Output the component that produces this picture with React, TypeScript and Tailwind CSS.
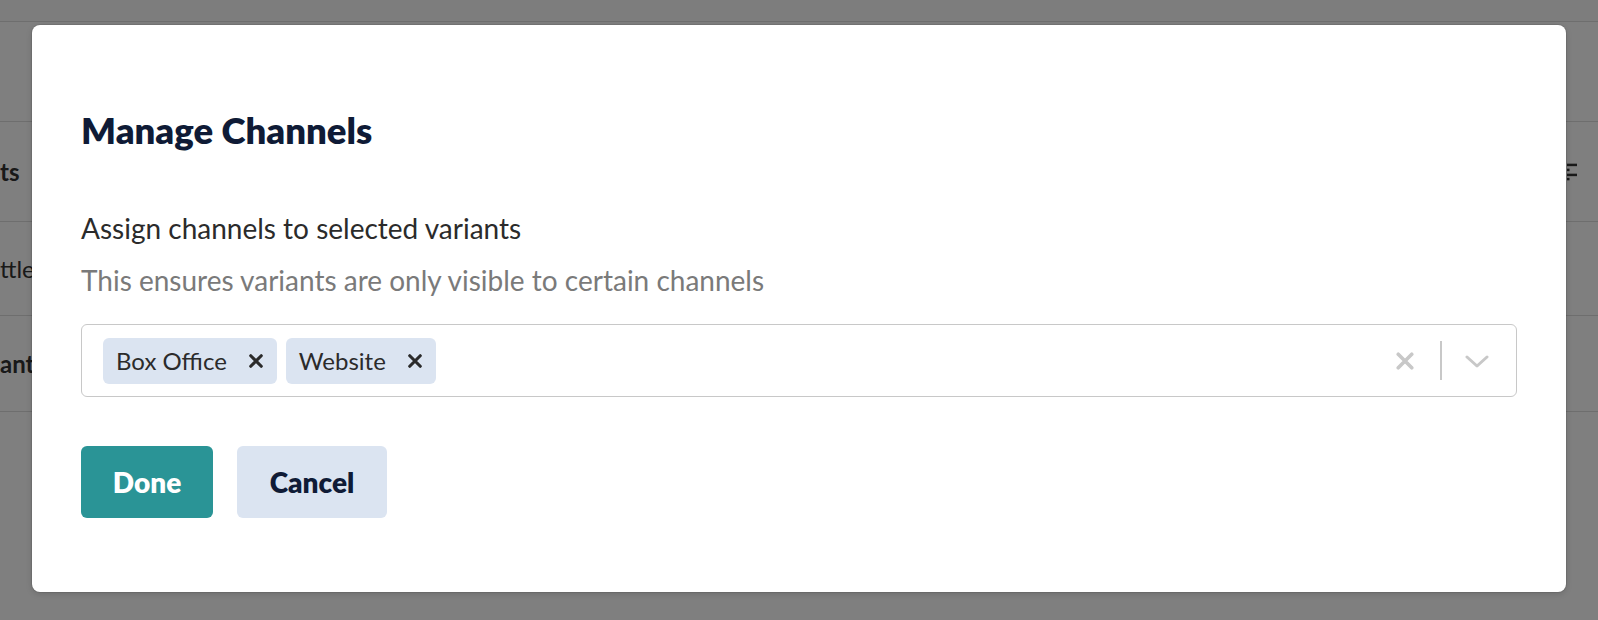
import React from "react";

const FONT = { fontFamily: "Lato, 'Noto Sans', sans-serif" };

// rows of the table sitting behind the dialog; only their left edges show
const ROWS = [
  { text: "ts", bold: true, h: "h-[100px]" },
  { text: "ttle", bold: false, h: "h-[94px]" },
  { text: "ant", bold: true, h: "h-[96px]" },
];

function XMark({ className, weight = 2.8 }: { className?: string; weight?: number }) {
  return (
    <svg viewBox="0 0 16 16" className={className} fill="none" stroke="currentColor" strokeWidth={weight} strokeLinecap="round">
      <path d="M2 2l12 12M14 2L2 14" />
    </svg>
  );
}

function Chip({ label }: { label: string }) {
  return (
    <div className="flex h-[46px] items-center gap-[22px] rounded-[6px] bg-[#dbe4f1] pl-[13px] pr-[14px]">
      <span className="text-[24px] leading-none text-[#2b2b2b]">{label}</span>
      <XMark className="h-[14px] w-[14px] text-[#2b2b2b]" weight={3.6} />
    </div>
  );
}

export default function App() {
  return (
    <div className="relative h-[620px] w-[1598px] overflow-hidden bg-white" style={FONT}>
      {/* page behind the modal */}
      <div className="h-[22px] border-b border-[#dcdcdc] bg-[#fafafa]" />
      <div className="h-[100px] border-b border-[#dcdcdc]" />
      {ROWS.map((row, i) => (
        <div key={i} className={`flex items-center justify-between border-b border-[#dcdcdc] ${row.h}`}>
          <span className={`text-[24px] text-[#333] ${row.bold ? "font-bold" : ""}`}>{row.text}</span>
          {i === 0 && (
            <svg viewBox="0 0 12 20" className="mr-[21px] h-[20px] w-[10px] text-[#333]" fill="currentColor">
              <rect x="0" y="0" width="12" height="3" />
              <rect x="0" y="6" width="3" height="3" />
              <rect x="0" y="12" width="12" height="3" />
              <rect x="0" y="17" width="3" height="3" />
            </svg>
          )}
        </div>
      ))}

      {/* overlay */}
      <div className="absolute inset-0 bg-black/50" />

      {/* modal */}
      <div className="absolute left-[32px] right-[32px] top-[25px] bottom-[28px] rounded-[8px] bg-white px-[49px] pt-[83px] shadow-[0_0_0_1px_rgba(0,0,0,0.08),0_2px_6px_rgba(0,0,0,0.15)]">
        <h2 className="text-[36.5px] font-extrabold leading-[44px] text-[#0f1b36]">Manage Channels</h2>
        <p className="mt-[58px] text-[28px] leading-[36px] text-[#2b2b2b]">Assign channels to selected variants</p>
        <p className="mt-[16px] text-[28px] leading-[36px] text-[#7a7a7a]">
          This ensures variants are only visible to certain channels
        </p>

        <div className="mt-[26px] flex h-[73px] items-center rounded-[6px] border border-[#c8c8c8] pl-[21px] pr-[27px]">
          <div className="flex flex-1 items-center gap-[9px]">
            <Chip label="Box Office" />
            <Chip label="Website" />
          </div>
          <XMark className="h-[18px] w-[18px] text-[#c8c8c8]" weight={3.2} />
          <div className="ml-[26px] h-[39px] w-[2px] bg-[#c8c8c8]" />
          <svg viewBox="0 0 24 24" className="ml-[23px] h-[24px] w-[24px] text-[#c8c8c8]" fill="none" stroke="currentColor" strokeWidth="3" strokeLinecap="round" strokeLinejoin="round">
            <path d="M2 8l10 9 10-9" />
          </svg>
        </div>

        <div className="mt-[49px] flex gap-[24px]">
          <button className="h-[72px] w-[132px] rounded-[6px] bg-[#2a9496] text-[28px] font-extrabold text-white">Done</button>
          <button className="h-[72px] w-[150px] rounded-[6px] bg-[#dbe4f1] text-[28px] font-extrabold text-[#0f1b36]">Cancel</button>
        </div>
      </div>
    </div>
  );
}
